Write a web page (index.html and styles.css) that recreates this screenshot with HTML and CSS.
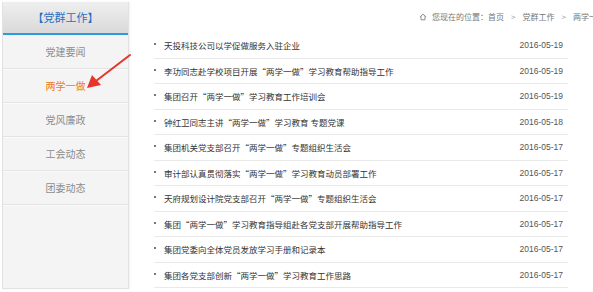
FILE: index.html
```html
<!DOCTYPE html>
<html lang="zh">
<head>
  <meta charset="UTF-8" />
  <title>两学一做</title>
  <link rel="stylesheet" href="styles.css">
</head>
<body>
  <div class="page">
    <aside class="side">
      <div class="side-title">【党群工作】</div>
      <ul class="side-menu">
        <li>党建要闻</li>
        <li class="active">两学一做</li>
        <li>党风廉政</li>
        <li>工会动态</li>
        <li>团委动态</li>
      </ul>
    </aside>

    <main class="main">
      <div class="crumb">
        <svg class="home" viewBox="0 0 10 10" width="8" height="8">
          <path d="M1 5 L5 1.5 L9 5 M2.5 4 V8.5 H7.5 V4" fill="none" stroke="#888" stroke-width="1.2"/>
        </svg>
        <span>您现在的位置：首页</span>
        <span class="sep">&gt;</span>
        <span>党群工作</span>
        <span class="sep">&gt;</span>
        <span>两学一做</span>
      </div>

      <ul class="news">
        <li><span class="title">天投科技公司以学促做服务入驻企业</span><span class="date">2016-05-19</span></li>
        <li><span class="title">李功同志赴学校项目开展“两学一做”学习教育帮助指导工作</span><span class="date">2016-05-19</span></li>
        <li><span class="title">集团召开“两学一做”学习教育工作培训会</span><span class="date">2016-05-19</span></li>
        <li><span class="title">钟红卫同志主讲“两学一做”学习教育 专题党课</span><span class="date">2016-05-18</span></li>
        <li><span class="title">集团机关党支部召开“两学一做”专题组织生活会</span><span class="date">2016-05-17</span></li>
        <li><span class="title">审计部认真贯彻落实“两学一做”学习教育动员部署工作</span><span class="date">2016-05-17</span></li>
        <li><span class="title">天府规划设计院党支部召开“两学一做”专题组织生活会</span><span class="date">2016-05-17</span></li>
        <li><span class="title">集团“两学一做”学习教育指导组赴各党支部开展帮助指导工作</span><span class="date">2016-05-17</span></li>
        <li><span class="title">集团党委向全体党员发放学习手册和记录本</span><span class="date">2016-05-17</span></li>
        <li><span class="title">集团各党支部创新“两学一做”学习教育工作思路</span><span class="date">2016-05-17</span></li>
      </ul>
    </main>

    <!-- red annotation arrow -->
    <svg class="arrow" width="60" height="45" viewBox="0 0 60 45">
      <line x1="48" y1="2" x2="14" y2="28" stroke="#e8342a" stroke-width="2" stroke-linecap="round"/>
      <polygon points="5,35 10,22 19,32" fill="#e8342a"/>
    </svg>
  </div>
</body>
</html>
```

FILE: styles.css
```css
html, body {
  margin: 0;
  padding: 0;
  width: 593px;
  height: 292px;
  overflow: hidden;
  background: #fff;
}

body {
  font-family: "Liberation Sans", "Noto Sans CJK SC", sans-serif;
  color: #333;
}

.page {
  position: relative;
  display: flex;
  height: 292px;
}

ul {
  list-style: none;
  margin: 0;
  padding: 0;
}

/* sidebar */
.side {
  flex: 0 0 auto;
  width: 125px;
  height: 286px;
  margin: 2px 0 0 2px;
  background: #f4f4f4;
  border: 1px solid #e2e2e2;
  border-top: none;
  box-shadow: 1px 0 2px rgba(0, 0, 0, 0.06);
}

.side-title {
  height: 31px;
  line-height: 31px;
  text-align: center;
  font-family: "Noto Sans CJK SC", sans-serif;
  font-size: 11px;
  color: #1d6fc4;
  background: linear-gradient(#efefef, #d9d9d9);
  border-bottom: 2px solid #2b9ce2;
}

.side-menu li {
  height: 33px;
  line-height: 33px;
  text-align: center;
  font-family: "Noto Sans CJK SC", sans-serif;
  font-size: 10px;
  color: #8c8c8c;
  border-bottom: 1px solid #e3e3e3;
  box-shadow: 0 1px 0 #fbfbfb;
}

.side-menu li.active {
  color: #f07b22;
}

/* content */
.main {
  flex: 1;
  min-width: 0;
  padding: 0 25px 0 25px;
}

.crumb {
  height: 33px;
  display: flex;
  align-items: center;
  gap: 3px;
  padding-left: 265px;
  white-space: nowrap;
  font-family: "Noto Sans CJK SC", sans-serif;
  font-size: 8px;
  color: #777;
}

.crumb .home {
  flex: 0 0 auto;
  margin-right: 2px;
}

.crumb .sep {
  margin: 0 4px;
  color: #999;
}

.news li {
  display: flex;
  justify-content: space-between;
  align-items: center;
  height: 24.5px;
  padding-right: 5px;
  border-bottom: 1px solid #e9e9e9;
  font-size: 8.5px;
}

.news .title {
  position: relative;
  padding-left: 10px;
  font-family: "Noto Sans CJK SC", sans-serif;
  color: #333;
}

.news .title::before {
  content: "";
  position: absolute;
  left: 0;
  top: 50%;
  width: 2px;
  height: 2px;
  margin-top: -2px;
  background: #777;
}

.news .date {
  color: #555;
}

.arrow {
  position: absolute;
  left: 82px;
  top: 53px;
}
```
